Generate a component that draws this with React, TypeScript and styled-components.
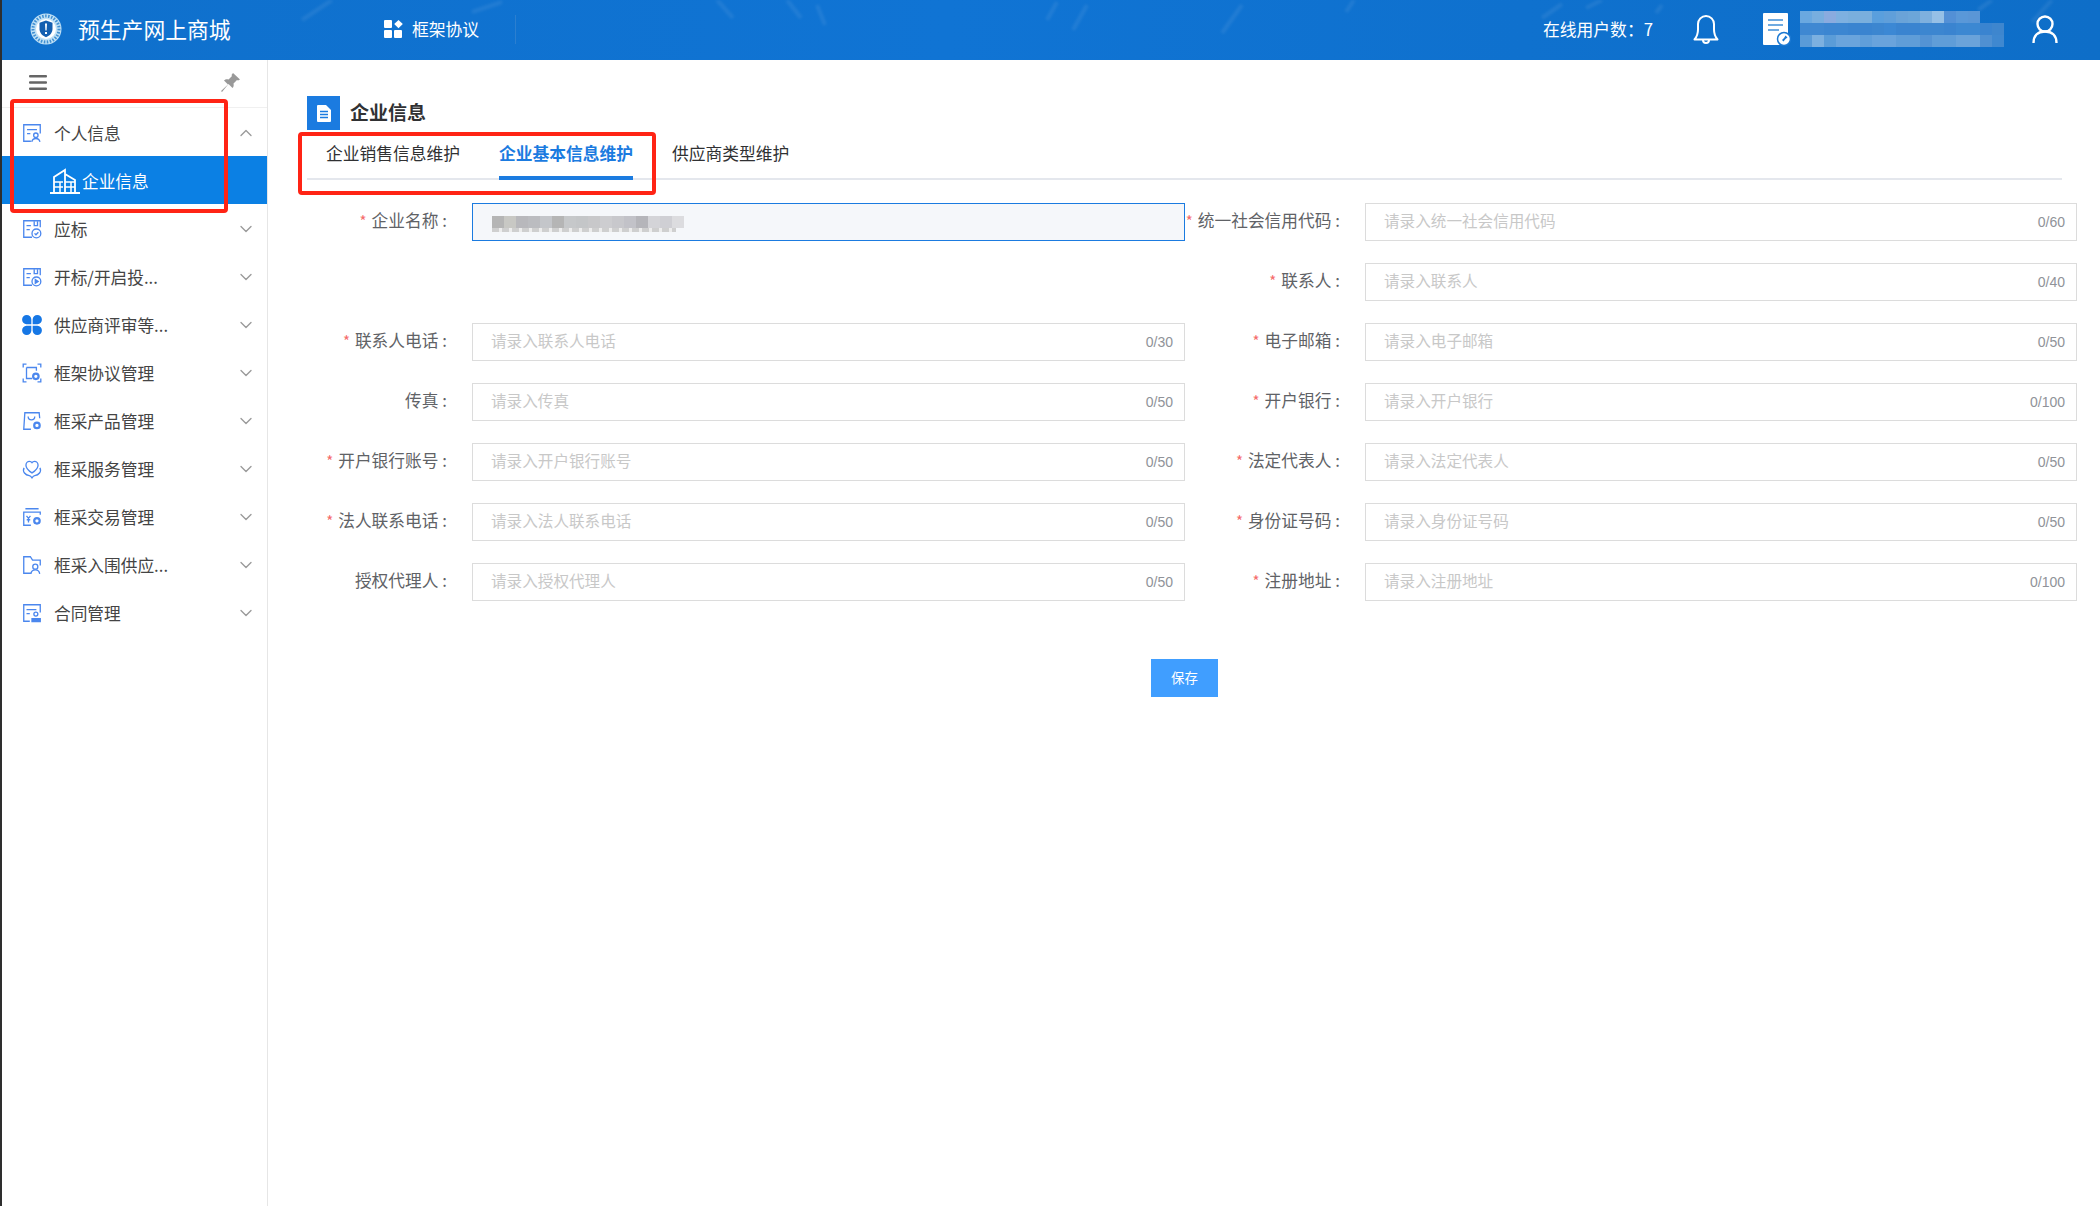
import React from 'react';
import styled, { createGlobalStyle } from 'styled-components';
import { ChevronDown, ChevronUp } from 'lucide-react';

const GlobalStyle = createGlobalStyle`
  html, body {
    margin: 0;
    padding: 0;
    background: #fff;
    font-family: "Noto Sans CJK SC", "Liberation Sans", sans-serif;
  }
  * { box-sizing: border-box; }
`;

const Page = styled.div`
  position: relative;
  width: 2100px;
  height: 1206px;
  border-left: 2px solid #2e2e2e;
  overflow: hidden;
`;
const Header = styled.header`
  position: relative;
  height: 60px;
  padding-bottom: 2px;
  display: flex;
  align-items: center;
  background: linear-gradient(90deg, #0f70cc, #1074d4 45%, #0e6ec8);
  color: #fff;
  overflow: hidden;
`;
const Streaks = styled.svg`
  position: absolute;
  inset: 0;
  width: 100%;
  height: 100%;
  filter: blur(1.5px);
`;
const Brand = styled.div`
  position: relative;
  display: flex;
  align-items: center;
  gap: 16px;
  margin-left: 28px;
  width: 354px;
`;
const BrandName = styled.span`
  font-size: 21.8px;
  margin-top: -2px;
  white-space: nowrap;
`;
const HeaderNav = styled.div`
  position: relative;
  display: flex;
  align-items: center;
  gap: 9px;
  width: 132px;
  height: 29px;
  border-right: 1px solid #2b7fd0;
  font-size: 16.8px;
`;
const HeaderRight = styled.div`
  position: relative;
  display: flex;
  align-items: center;
  margin-left: auto;
  margin-right: 42px;
`;
const Online = styled.span`
  font-size: 16.8px;
  margin-right: 40px;
  white-space: nowrap;
`;
const DocIcon = styled.svg`
  margin-left: 44px;
  margin-right: 9px;
`;
const UserIcon = styled.svg`
  margin-left: 28px;
`;
const Mosaic = styled.div`
  display: flex;
  flex-direction: column;
`;
const MosaicRow = styled.div`
  display: flex;
`;
const MosaicCell = styled.i`
  display: block;
  width: 12px;
  height: 12px;
`;

const Body = styled.div`
  display: flex;
  height: 1146px;
`;
const Sidebar = styled.aside`
  width: 266px;
  flex: none;
  border-right: 1px solid #e6e6e6;
  background: #fff;
`;
const Toggle = styled.div`
  height: 48px;
  padding: 0 27px 2px 27px;
  display: flex;
  align-items: center;
  justify-content: space-between;
  border-bottom: 1px solid #f0f0f0;
`;
const MenuRow = styled.div`
  height: 48px;
  display: flex;
  align-items: center;
  padding: 2px 0 0 19px;
  color: #444;
  font-size: 16.7px;
`;
const MenuLabel = styled.span`
  margin-left: 11px;
  flex: 1;
  white-space: nowrap;
`;
const MenuChevron = styled.span`
  display: flex;
  color: #9a9a9a;
  margin-right: 11px;
`;
const SubRow = styled.div`
  height: 48px;
  display: flex;
  align-items: center;
  gap: 2px;
  padding: 2px 0 0 48px;
  background: #0b80e4;
  color: #fff;
  font-size: 16.7px;
`;

const Main = styled.main`
  flex: 1;
  padding: 36px 23px 0 39px;
`;
const PageTitle = styled.div`
  display: flex;
  align-items: center;
  gap: 10px;
  height: 34px;
  font-size: 19px;
  font-weight: 700;
  color: #303133;
`;
const TitleText = styled.span`
  margin-top: -3px;
`;
const TitleIcon = styled.span`
  width: 33px;
  height: 34px;
  display: flex;
  align-items: center;
  justify-content: center;
  background: #1b7be0;
`;
const Tabs = styled.div`
  display: flex;
  gap: 39px;
  height: 50px;
  margin-right: 15px;
  padding-left: 19px;
  border-bottom: 2px solid #e4e7ed;
`;
const Tab = styled.div<{ $active?: boolean }>`
  height: 50px;
  line-height: 46px;
  font-size: 16.75px;
  white-space: nowrap;
  font-weight: ${p => (p.$active ? 700 : 400)};
  color: ${p => (p.$active ? '#1b7be0' : '#303133')};
  border-bottom: 4px solid ${p => (p.$active ? '#1b7be0' : 'transparent')};
`;
const FormGrid = styled.div`
  display: grid;
  grid-template-columns: 165px 713px 180px 712px;
  grid-auto-rows: 38px;
  row-gap: 22px;
  margin-top: 23px;
`;
const Label = styled.label`
  display: flex;
  align-items: center;
  justify-content: flex-end;
  padding: 0 25px 4px 0;
  font-size: 16.7px;
  color: #606266;
  white-space: nowrap;
`;
const Colon = styled.span`
  margin-left: 4px;
`;
const Star = styled.span`
  color: #f56c6c;
  margin-right: 5px;
  font-size: 15px;
`;
const Field = styled.div`
  position: relative;
`;
const Input = styled.input<{ $focus?: boolean }>`
  width: 100%;
  height: 38px;
  padding: 0 60px 4px 18px;
  border: 1px solid ${p => (p.$focus ? '#1b7be0' : '#dcdcdc')};
  background: ${p => (p.$focus ? '#f5f7fa' : '#fff')};
  outline: none;
  font-size: 15.6px;
  font-family: inherit;
  &::placeholder { color: #c8c8c8; }
`;
const Counter = styled.span`
  position: absolute;
  right: 12px;
  top: 11px;
  font-size: 14px;
  line-height: 16px;
  font-family: "Liberation Sans", sans-serif;
  color: #909399;
`;
const NameBlur = styled.div`
  position: absolute;
  left: 20px;
  top: 13px;
`;
const NameTail = styled.div`
  width: 184px;
  height: 4px;
  background: repeating-linear-gradient(90deg, #cfcfcf 0 7px, #ededed 7px 10px);
`;
const SaveRow = styled.div`
  display: flex;
  justify-content: center;
  margin: 58px 15px 0 0;
`;
const SaveButton = styled.button`
  width: 67px;
  height: 38px;
  padding: 0 0 2px;
  border: none;
  background: #409eff;
  color: #fff;
  font-size: 13.4px;
  font-family: inherit;
`;
const RedBox = styled.div<{ $left: number; $top: number; $w: number; $h: number }>`
  position: absolute;
  left: ${p => p.$left}px;
  top: ${p => p.$top}px;
  width: ${p => p.$w}px;
  height: ${p => p.$h}px;
  border: 4px solid #ff2415;
  border-radius: 4px;
  pointer-events: none;
`;

const IconSvg = styled.svg`
  flex: none;
  display: block;
`;

const BLUE = '#4b87ee';
const Ico = ({ children }: { children: React.ReactNode }) => (
  <IconSvg width="22" height="22" viewBox="0 0 20 20" fill="none" stroke={BLUE} strokeWidth="1.2">
    {children}
  </IconSvg>
);

const menuIcons: Record<string, React.ReactNode> = {
  person: (
    <>
      <path d="M9 17.5H2.5v-15h15v8" />
      <path d="M5.5 7h9M5.5 10.5h3" />
      <circle cx="13.5" cy="12" r="2" />
      <path d="M9.8 18c.4-2 1.8-3 3.7-3s3.3 1 3.7 3" />
    </>
  ),
  check: (
    <>
      <path d="M10 17.5H2.5v-15h15v6" />
      <path d="M5 7h4M5 10.5h3M12 3v4h3V3" />
      <circle cx="14" cy="14" r="4" />
      <path d="M12.3 14l1.3 1.3 2.2-2.3" />
    </>
  ),
  play: (
    <>
      <path d="M10 17.5H2.5v-15h15v6" />
      <path d="M5 7h4M5 10.5h3M12 3v4h3V3" />
      <circle cx="14" cy="14" r="4" />
      <path d="M13 12.3l2.6 1.7-2.6 1.7z" fill={BLUE} />
    </>
  ),
  clover: (
    <g fill="#1677e5" stroke="none">
      <path d="M1 5a4.2 4.2 0 0 1 8.4 0v4.4H5A4.2 4.2 0 0 1 1 5z" />
      <path d="M19 5a4.2 4.2 0 0 0-8.4 0v4.4H15A4.2 4.2 0 0 0 19 5z" />
      <path d="M1 15a4.2 4.2 0 0 0 8.4 0v-4.4H5A4.2 4.2 0 0 0 1 15z" />
      <path d="M19 15a4.2 4.2 0 0 1-8.4 0v-4.4H15A4.2 4.2 0 0 1 19 15z" />
    </g>
  ),
  frame: (
    <>
      <path d="M5 2H2v3M15 2h3v3M2 15v3h3M18 15v3h-3" />
      <path d="M5 5v10h5M5 5h9v3" />
      <circle cx="13.5" cy="13" r="2.5" strokeWidth="2" />
    </>
  ),
  bag: (
    <>
      <path d="M9 17.5H2.5l1-15h13l.5 5" />
      <path d="M6.5 6c0 4 6 4 6 0" />
      <circle cx="14.5" cy="14" r="2.5" strokeWidth="2" />
    </>
  ),
  heart: (
    <>
      <path d="M10 13.5C6 11 4.5 9 4.5 6.500 4.500 4.500 6 3 7.700 3c1 0 1.800.5 2.300 1.200C10.500 3.500 11.300 3 12.300 3c1.700 0 3.200 1.500 3.200 3.500 0 2.500-1.500 4.500-5.500 7z" />
      <path d="M2.800 9C1 12.500 4 15.500 7.500 16c1 .2 1.800 1 2.500 2 .7-1 1.500-1.800 2.500-2 3.500-.5 6.500-3.500 4.700-7" />
    </>
  ),
  money: (
    <>
      <path d="M9 17.5H2.500v-12h15V8M4 2.500h12" />
      <path d="M5 9l1.800 2.200L8.600 9M6.800 11.200V15M5.200 12.500h3.200" />
      <circle cx="14.5" cy="13.5" r="2.5" strokeWidth="2" />
    </>
  ),
  folder: (
    <>
      <path d="M9 17.5H2.500v-15h6l2 3h7v5" />
      <circle cx="13" cy="11.5" r="2.3" />
      <path d="M9 18c.3-2.400 1.800-3.600 4-3.600s3.700 1.200 4 3.600" />
    </>
  ),
  contract: (
    <>
      <path d="M8 17.5H2.500v-15h15v7" />
      <path d="M5 7h9M5 10.500h3" />
      <circle cx="13.5" cy="11" r="1.8" />
      <path d="M10 17.800v-2.600h7.500v2.600z" fill={BLUE} />
    </>
  ),
};

const menus: [string, string][] = [
  ['check', '应标'],
  ['play', '开标/开启投...'],
  ['clover', '供应商评审等...'],
  ['frame', '框架协议管理'],
  ['bag', '框采产品管理'],
  ['heart', '框采服务管理'],
  ['money', '框采交易管理'],
  ['folder', '框采入围供应...'],
  ['contract', '合同管理'],
];

type FieldDef = { label?: string; hint?: string; max?: number; required?: boolean };

const fields: FieldDef[] = [
  { label: '统一社会信用代码', hint: '请录入统一社会信用代码', max: 60, required: true },
  {},
  { label: '联系人', hint: '请录入联系人', max: 40, required: true },
  { label: '联系人电话', hint: '请录入联系人电话', max: 30, required: true },
  { label: '电子邮箱', hint: '请录入电子邮箱', max: 50, required: true },
  { label: '传真', hint: '请录入传真', max: 50 },
  { label: '开户银行', hint: '请录入开户银行', max: 100, required: true },
  { label: '开户银行账号', hint: '请录入开户银行账号', max: 50, required: true },
  { label: '法定代表人', hint: '请录入法定代表人', max: 50, required: true },
  { label: '法人联系电话', hint: '请录入法人联系电话', max: 50, required: true },
  { label: '身份证号码', hint: '请录入身份证号码', max: 50, required: true },
  { label: '授权代理人', hint: '请录入授权代理人', max: 50 },
  { label: '注册地址', hint: '请录入注册地址', max: 100, required: true },
];

const headerMosaic = [
  ['#6aa8e0', '#78aedf', '#8aabdf', '#7eb0e0', '#7aafdd', '#7aafdd', '#5a9fdd', '#609fda', '#6aa3d8', '#6ca6d9', '#7eb0de', '#96c0e6', '#5390d6', '#5a98d8', '#5a96d6'],
  ['#3f88d2', '#3f88d2', '#3c86d1', '#3c86d1', '#3a84d0', '#3a84d0', '#3c86d0', '#3c88d4', '#3a84d0', '#3a84d0', '#3c86d0', '#3c86d0', '#3a84d0', '#3c88d2', '#3c88d2', '#3a84d0', '#3e86ce'],
  ['#5a9bd8', '#7cb0e0', '#5a9cd8', '#6aa4dc', '#6aa4dc', '#5f9eda', '#69a3dc', '#69a3dc', '#5f9dd8', '#5f9dd8', '#5493d4', '#5f9dd8', '#5f9dd8', '#6aa3da', '#6aa3da', '#4f90d2', '#3f88d0'],
];
const nameMosaic = ['#b5b5b5', '#c8c8c4', '#b8b8bc', '#bbbcc0', '#c4c6ca', '#b5b5b5', '#c6c8ca', '#c4c6c8', '#c8c8ca', '#cdcdd0', '#c8c8cc', '#c2c2c8', '#b5b5ba', '#d4d4d8', '#cfcfd4', '#dcdcdf'];

const FormField = ({ f }: { f: FieldDef }) => {
  if (!f.label) {
    return (
      <>
        <div />
        <div />
      </>
    );
  }
  return (
    <>
      <Label>
        {f.required && <Star>*</Star>}
        {f.label}
        <Colon>:</Colon>
      </Label>
      <Field>
        <Input placeholder={f.hint} readOnly />
        <Counter>0/{f.max}</Counter>
      </Field>
    </>
  );
};

const App = () => (
  <Page>
    <GlobalStyle />
    <Header>
      <Streaks viewBox="0 0 2098 60" preserveAspectRatio="none" fill="none" stroke="#fff" strokeOpacity=".08" strokeWidth="4">
        <path d="M715 0l16 18M785 0l14 18M815 5l8 20M1055 2l-10 18M1085 5l-14 25M1240 5l-20 28M1352 0l-8 12M1660 5l-6 8M1990 0l-14 10M2050 0l-20 22M1560 4l-20 14M1600 0l-16 8M330 0l-30 20M500 2l-30 10" />
      </Streaks>
      <Brand>
        <svg width="32" height="32" viewBox="0 0 32 32">
          <circle cx="16" cy="16" r="15.5" fill="#bfe0f5" />
          <circle cx="16" cy="16" r="13" fill="none" stroke="#3f8fd2" strokeWidth="3" strokeDasharray="1.5 1.5" />
          <circle cx="16" cy="16" r="10" fill="#fff" />
          <path d="M16 7.5l6.500 2.300v6c0 4-2.700 7-6.500 8.500-3.800-1.500-6.500-4.500-6.500-8.500v-6z" fill="#145fb0" />
          <path d="M15 10.500h2l-.4 7h-1.200zM15 19h2v2h-2z" fill="#fff" />
        </svg>
        <BrandName>预生产网上商城</BrandName>
      </Brand>
      <HeaderNav>
        <svg width="19" height="18" viewBox="0 0 19 18" fill="#fff">
          <rect x="0" y="0" width="8" height="8" rx="1" />
          <path d="M14.500 0l4.300 4-4.300 4.300L10.200 4z" />
          <rect x="0" y="10" width="8" height="8" rx="1" />
          <rect x="10" y="10" width="8" height="8" rx="1" />
        </svg>
        框架协议
      </HeaderNav>
      <HeaderRight>
        <Online>在线用户数：7</Online>
        <svg width="26" height="32" viewBox="0 0 26 32" fill="none" stroke="#fff" strokeWidth="2">
          <path d="M1.500 26.500c2.500-3 3.500-5 3.500-10V11a8 8 0 0 1 16 0v5.500c0 5 1 7 3.500 10z" strokeLinejoin="round" />
          <path d="M10 27c0 4 6 4 6 0" />
        </svg>
        <DocIcon width="28" height="33" viewBox="0 0 28 33">
          <path d="M0 1a1 1 0 0 1 1-1h23a1 1 0 0 1 1 1v31H1a1 1 0 0 1-1-1z" fill="#fff" />
          <path d="M5 7h15M5 12h15M5 17h11" stroke="#3f8fd8" strokeWidth="1.5" />
          <circle cx="21" cy="26" r="6.5" fill="#fff" stroke="#1a78d2" strokeWidth="1.5" />
          <path d="M22.500 22.500l2 2-2 1.500-2 2.500-1.500-1.500 2-2z" fill="#1a78d2" />
        </DocIcon>
        <Mosaic>
          {headerMosaic.map((row, i) => (
            <MosaicRow key={i}>
              {row.map((c, j) => (
                <MosaicCell key={j} style={{ background: c }} />
              ))}
            </MosaicRow>
          ))}
        </Mosaic>
        <UserIcon width="26" height="28" viewBox="0 0 26 28" fill="none" stroke="#fff" strokeWidth="2.4">
          <circle cx="13" cy="9" r="7.5" />
          <path d="M1.500 28c0-7 4-11.500 11.500-11.500S24.500 21 24.500 28" />
        </UserIcon>
      </HeaderRight>
    </Header>
    <Body>
      <Sidebar>
        <Toggle>
          <svg width="18" height="15" viewBox="0 0 18 15" fill="#666">
            <rect width="18" height="2.6" rx="1" />
            <rect y="6.2" width="18" height="2.6" rx="1" />
            <rect y="12.4" width="18" height="2.6" rx="1" />
          </svg>
          <svg width="19" height="19" viewBox="0 0 19 19" fill="#999">
            <path d="M12 0l7 6.500-2 1-1-.5-3.500 3.500c.5 2 0 3.500-1 4.500L7.500 11 1 19l-1-1 7-6.500-4-4c1.200-1 2.500-1.500 4.500-1L11 3l-.5-1z" />
          </svg>
        </Toggle>
        <MenuRow>
          <Ico>{menuIcons.person}</Ico>
          <MenuLabel>个人信息</MenuLabel>
          <MenuChevron>
            <ChevronUp size={20} strokeWidth={1.6} />
          </MenuChevron>
        </MenuRow>
        <SubRow>
          <svg width="30" height="26" viewBox="0 0 30 26" fill="none" stroke="#fff" strokeWidth="1.8">
            <path d="M4 24V9L15 2v22M15 6l10 6v12" />
            <path d="M4 14h9M4 19h9M15 14h10M15 19h10M10 14v10M21 14v10" strokeWidth="1.5" />
            <path d="M0 25h30" strokeWidth="2" />
          </svg>
          企业信息
        </SubRow>
        {menus.map(([icon, label]) => (
          <MenuRow key={label}>
            <Ico>{menuIcons[icon]}</Ico>
            <MenuLabel>{label}</MenuLabel>
            <MenuChevron>
              <ChevronDown size={20} strokeWidth={1.6} />
            </MenuChevron>
          </MenuRow>
        ))}
      </Sidebar>
      <Main>
        <PageTitle>
          <TitleIcon>
            <svg width="14" height="17" viewBox="0 0 14 17">
              <path d="M0 1a1 1 0 0 1 1-1h8l5 5v11a1 1 0 0 1-1 1H1a1 1 0 0 1-1-1z" fill="#fff" />
              <path d="M3 6.500h8M3 9.500h8M3 12.500h8" stroke="#1b7be0" strokeWidth="1.3" />
            </svg>
          </TitleIcon>
          <TitleText>企业信息</TitleText>
        </PageTitle>
        <Tabs>
          <Tab>企业销售信息维护</Tab>
          <Tab $active>企业基本信息维护</Tab>
          <Tab>供应商类型维护</Tab>
        </Tabs>
        <FormGrid>
          <Label>
            <Star>*</Star>企业名称<Colon>:</Colon>
          </Label>
          <Field>
            <Input $focus readOnly />
            <NameBlur>
              <MosaicRow>
                {nameMosaic.map((c, i) => (
                  <MosaicCell key={i} style={{ background: c }} />
                ))}
              </MosaicRow>
              <NameTail />
            </NameBlur>
          </Field>
          {fields.map((f, i) => (
            <FormField key={i} f={f} />
          ))}
        </FormGrid>
        <SaveRow>
          <SaveButton>保存</SaveButton>
        </SaveRow>
      </Main>
    </Body>
    <RedBox $left={8} $top={99} $w={218} $h={114} />
    <RedBox $left={296} $top={132} $w={358} $h={63} />
  </Page>
);

export default App;
